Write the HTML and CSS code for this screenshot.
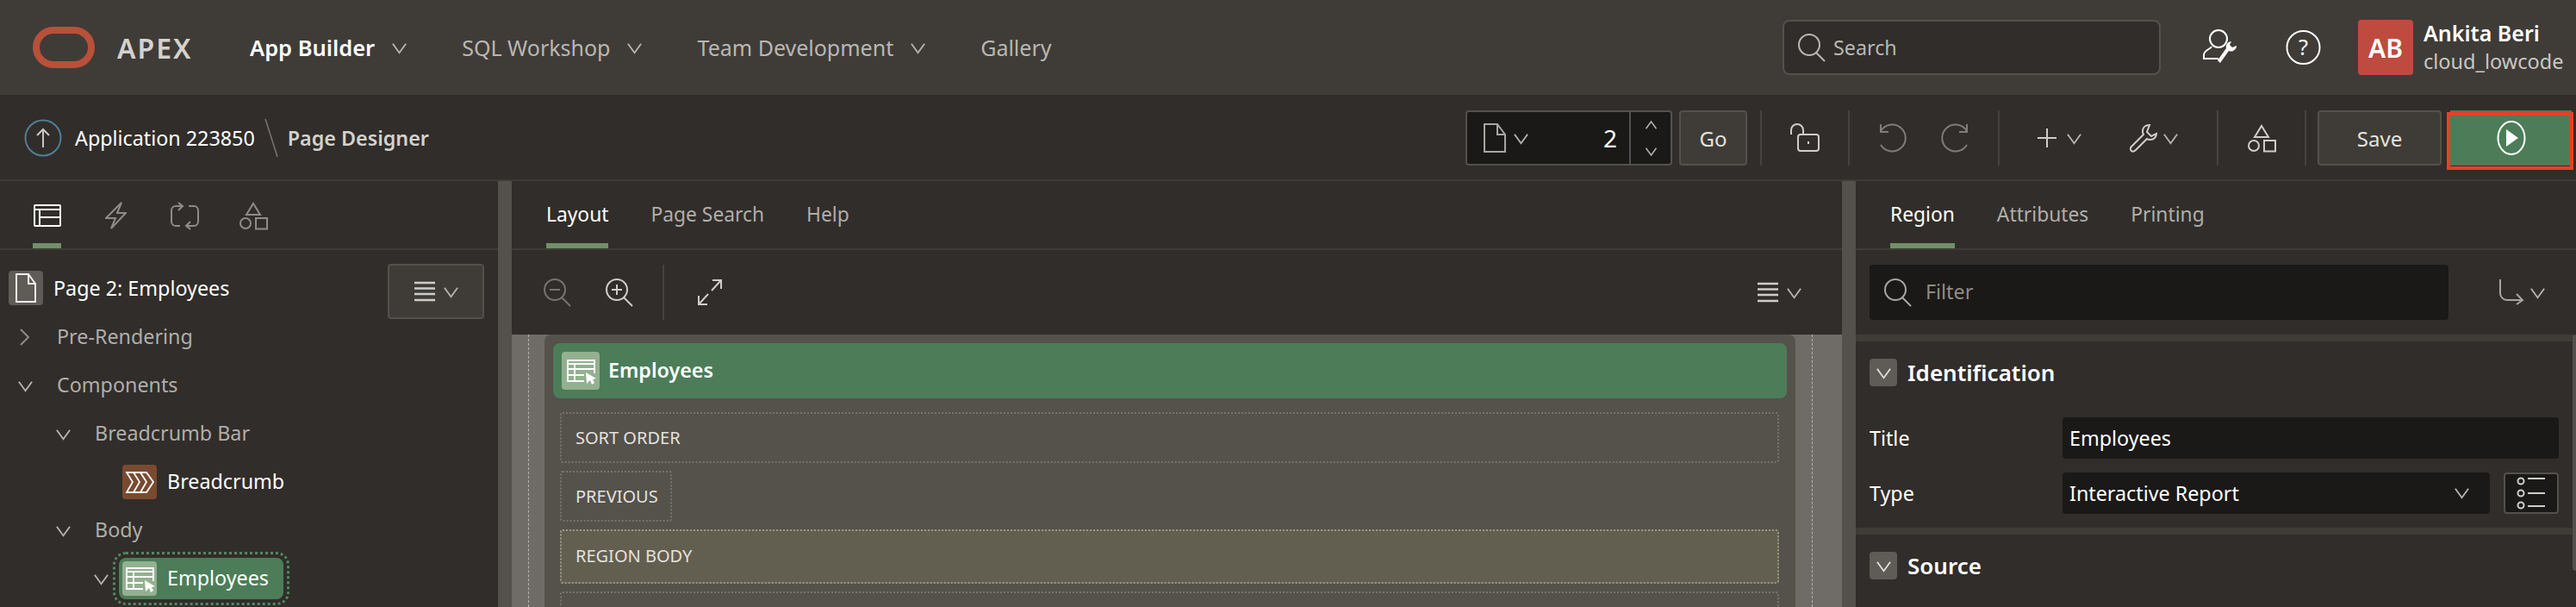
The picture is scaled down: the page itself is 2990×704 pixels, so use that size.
FILE: index.html
```html
<!DOCTYPE html>
<html>
<head>
<title>Page Designer</title>
<link rel="stylesheet" href="styles.css">
</head>
<body>

<svg class="defs" width="0" height="0">
  <symbol id="chev" viewBox="0 0 20 20"><path d="M2 5l8 11 8-11" fill="none" stroke="currentColor" stroke-width="2"/></symbol>
  <symbol id="shapes" viewBox="0 0 33 33"><path d="M16 2l8 13H8z" fill="none" stroke="currentColor" stroke-width="2"/><circle cx="7" cy="25" r="6" fill="none" stroke="currentColor" stroke-width="2"/><rect x="19" y="19" width="13" height="12.500" fill="none" stroke="currentColor" stroke-width="2"/></symbol>
  <symbol id="menu" viewBox="0 0 26 26"><path d="M1 3h24M1 9.500h24M1 16h24M1 23h24" stroke="currentColor" stroke-width="2.500"/></symbol>
  <symbol id="mag" viewBox="0 0 34 34"><circle cx="14" cy="14" r="12" fill="none" stroke="currentColor" stroke-width="2"/><path d="M22 23l10 10" stroke="currentColor" stroke-width="2"/></symbol>
  <symbol id="report" viewBox="0 0 40 40"><path d="M24 32H5V8h31v15M5 12h31M5 18h31M5 25h19M13 12v20" fill="none" stroke="currentColor" stroke-width="1.800"/><path d="M26 22l1 13 4-4 2 5 3-2-2-4 4-1z" fill="currentColor"/></symbol>
</svg>

<header class="topbar">
  <svg class="logo" width="72" height="48" viewBox="0 0 72 48"><rect x="4" y="4" width="64" height="40" rx="20" ry="20" fill="none" stroke="#b8503a" stroke-width="8"/></svg>
  <span class="brand">APEX</span>
  <nav class="mainnav">
    <a class="navitem navitem-on">App Builder <svg class="chev"><use href="#chev"/></svg></a>
    <a class="navitem">SQL Workshop <svg class="chev"><use href="#chev"/></svg></a>
    <a class="navitem">Team Development <svg class="chev"><use href="#chev"/></svg></a>
    <a class="navitem">Gallery</a>
  </nav>
  <div class="topright">
    <div class="search">
      <svg class="search-icon"><use href="#mag"/></svg>
      <span>Search</span>
    </div>
    <svg class="usertool" width="41" height="42" viewBox="0 0 41 42" fill="none" stroke="#fff" stroke-width="2"><ellipse cx="18" cy="11" rx="10" ry="10"/><path d="M10 20c-1 3-9 4-9 10v4h17"/><path d="M27 22c-1-4 2-8 6-8l-2 4 3 3 5-2c0 4-4 8-9 6L20 39l-3-3z" fill="#fff" stroke="none"/></svg>
    <svg class="help" width="41" height="42" viewBox="0 0 42 42"><circle cx="21" cy="21" r="19.500" fill="none" stroke="#fff" stroke-width="2"/><text x="21" y="30" class="help-q">?</text></svg>
    <div class="avatar">AB</div>
    <div class="who">
      <div class="who-name">Ankita Beri</div>
      <div class="who-id">cloud_lowcode</div>
    </div>
  </div>
</header>

<div class="subbar">
  <div class="crumbs">
    <svg width="44" height="44" viewBox="0 0 44 44" fill="none"><circle cx="22" cy="22" r="20.500" stroke="#4f7f93" stroke-width="2"/><path d="M22 33V12M15 19l7-7 7 7" stroke="#c9c7c3" stroke-width="2"/></svg>
    <span class="crumb">Application 223850</span>
    <svg class="crumb-sep" width="16" height="44" viewBox="0 0 16 44"><path d="M1 0l14 44" stroke="#777" stroke-width="1.500"/></svg>
    <span class="crumb-cur">Page Designer</span>
  </div>
  <div class="tools">
    <div class="pagebox">
      <svg class="page-icon" width="26" height="34" viewBox="0 0 26 34" fill="none" stroke="#a8a6a2" stroke-width="2"><path d="M1 1h15l9 12v20H1zM16 1v12h9"/></svg>
      <svg class="chev"><use href="#chev"/></svg>
      <span class="pagenum">2</span>
      <div class="spin">
        <svg class="chev-s chev-up"><use href="#chev"/></svg>
        <svg class="chev-s"><use href="#chev"/></svg>
      </div>
    </div>
    <button class="btn btn-go">Go</button>
    <i class="divider"></i>
    <div class="tool-group tg-narrow">
      <svg width="34" height="34" viewBox="0 0 34 34" fill="none" stroke="#cfcdc9" stroke-width="2"><path d="M1 13V8a7 7 0 0 1 14 0v5"/><rect x="9" y="13" width="24" height="19" rx="3"/><path d="M21 21v3"/></svg>
    </div>
    <i class="divider"></i>
    <div class="tool-group tg-undo">
      <svg width="32" height="34" viewBox="0 0 32 34" fill="none" stroke="#807c77" stroke-width="2"><path d="M2 1v9h9"/><path d="M2 9A15.500 15.500 0 1 1 2 25"/></svg>
      <svg width="32" height="34" viewBox="0 0 32 34" fill="none" stroke="#807c77" stroke-width="2"><path d="M30 1v9h-9"/><path d="M30 9A15.500 15.500 0 1 0 30 25"/></svg>
    </div>
    <i class="divider"></i>
    <div class="tool-group tg-add">
      <div class="tool-pair tool-pair-wide">
        <svg width="22" height="22" viewBox="0 0 22 22"><path d="M11 0v22M0 11h22" stroke="#cfcdc9" stroke-width="2"/></svg>
        <svg class="chev"><use href="#chev"/></svg>
      </div>
      <div class="tool-pair">
        <svg width="32" height="34" viewBox="0 0 32 32" fill="none" stroke="#cfcdc9" stroke-width="2"><path d="M23 1c-5 0-8 3-8 7 0 2 0 3 1 4L2 26c-2 2-1 4 0 5s3 1 5-1l13-13c1 1 3 1 4 1 4 0 7-3 7-7l-6 3-5-5z"/></svg>
        <svg class="chev"><use href="#chev"/></svg>
      </div>
    </div>
    <i class="divider"></i>
    <div class="tool-group tg-narrow">
      <svg class="shape-lg"><use href="#shapes"/></svg>
    </div>
    <i class="divider"></i>
    <button class="btn btn-save">Save</button>
    <button class="btn-run">
      <svg width="34" height="42" viewBox="0 0 34 42"><ellipse cx="17" cy="21" rx="15.500" ry="19" fill="none" stroke="#fff" stroke-width="2"/><path d="M11 11l14 10-14 10z" fill="#fff"/></svg>
    </button>
    <i class="annot"></i>
  </div>
</div>

<main class="designer">

  <section class="left">
    <div class="tabs tabs-icons">
      <a class="tab tab-on">
        <svg width="32" height="26" viewBox="0 0 32 26" fill="none" stroke="#fff" stroke-width="2"><rect x="1" y="1" width="30" height="24" rx="1"/><path d="M1 6h30M7 6v19M7 15h24"/></svg>
      </a>
      <a class="tab"><svg width="25" height="32" viewBox="0 0 25 32" fill="none" stroke="#8f8c87" stroke-width="2"><path d="M19 1L1 19h11L7 31l17-18H14z"/></svg></a>
      <a class="tab"><svg width="33" height="33" viewBox="0 0 33 33" fill="none" stroke="#8f8c87" stroke-width="2"><path d="M14 5H6a5 5 0 0 0-5 5v13a5 5 0 0 0 5 5h5M9 1l5 4-5 5M21 5h6a5 5 0 0 1 5 5v13a5 5 0 0 1-5 5h-9M23 23l-5 5 5 4"/></svg></a>
      <a class="tab"><svg class="shape-tab"><use href="#shapes"/></svg></a>
    </div>
    <div class="treehead">
      <div class="pageicon">
        <svg width="24" height="34" viewBox="0 0 24 34" fill="none" stroke="#eee" stroke-width="2"><path d="M1 1h14l8 11v21H1zM15 1v11h8"/></svg>
      </div>
      <span class="treehead-text">Page 2: Employees</span>
      <button class="btn btn-menu">
        <svg class="menu-icon"><use href="#menu"/></svg>
        <svg class="chev"><use href="#chev"/></svg>
      </button>
    </div>
    <div class="tree">
      <div class="row lvl1">
        <span class="twist"><svg width="12" height="20" viewBox="0 0 12 20"><path d="M1 1l9 9-9 9" fill="none" stroke="#8f8c87" stroke-width="2"/></svg></span>
        <span class="row-text">Pre-Rendering</span>
      </div>
      <div class="row lvl1">
        <span class="twist"><svg class="chev"><use href="#chev"/></svg></span>
        <span class="row-text">Components</span>
      </div>
      <div class="row lvl2">
        <span class="twist"><svg class="chev"><use href="#chev"/></svg></span>
        <span class="row-text">Breadcrumb Bar</span>
      </div>
      <div class="row lvl3">
        <span class="twist"></span>
        <div class="node">
          <span class="node-icon node-icon-brown">
            <svg width="40" height="40" viewBox="0 0 40 40" fill="none" stroke="#fff" stroke-width="1.800"><path d="M5 9h23l8 11-8 12H5l7-12zM13 9l7 11-7 12M21 9l7 11-7 12"/></svg>
          </span>
          <span class="node-text">Breadcrumb</span>
        </div>
      </div>
      <div class="row lvl2">
        <span class="twist"><svg class="chev"><use href="#chev"/></svg></span>
        <span class="row-text">Body</span>
      </div>
      <div class="row lvl3">
        <span class="twist"><svg class="chev"><use href="#chev"/></svg></span>
        <div class="node node-on">
          <span class="node-icon node-icon-green"><svg class="report"><use href="#report"/></svg></span>
          <span class="node-text">Employees</span>
        </div>
      </div>
    </div>
  </section>

  <div class="splitter"></div>

  <section class="middle">
    <div class="tabs">
      <a class="tab tab-on">Layout</a>
      <a class="tab">Page Search</a>
      <a class="tab">Help</a>
    </div>
    <div class="gridbar">
      <svg class="mag mag-off" viewBox="0 0 34 34"><use href="#mag"/><path d="M8 14h12" stroke="currentColor" stroke-width="2"/></svg>
      <svg class="mag" viewBox="0 0 34 34"><use href="#mag"/><path d="M8 14h12M14 8v12" stroke="currentColor" stroke-width="2"/></svg>
      <i class="divider divider-thin"></i>
      <svg width="28" height="30" viewBox="0 0 28 30" fill="none" stroke="#cfcdc9" stroke-width="2"><path d="M17 1h10v10M27 1L16 13M1 19v10h10M1 29l11-12"/></svg>
      <div class="gridbar-menu">
        <svg class="menu-icon"><use href="#menu"/></svg>
        <svg class="chev"><use href="#chev"/></svg>
      </div>
    </div>
    <div class="canvas">
      <div class="gutter gutter-l"><i class="gutter-line"></i></div>
      <div class="page">
        <div class="region-head">
          <span class="region-icon"><svg class="report"><use href="#report"/></svg></span>
          <span class="region-title">Employees</span>
        </div>
        <div class="slots">
          <div class="slot">SORT ORDER</div>
          <div class="slot slot-short">PREVIOUS</div>
          <div class="slot slot-body">REGION BODY</div>
          <div class="slot"></div>
        </div>
      </div>
      <div class="gutter gutter-r"><i class="gutter-line"></i></div>
    </div>
  </section>

  <div class="splitter"></div>

  <section class="right">
    <div class="tabs">
      <a class="tab tab-on">Region</a>
      <a class="tab">Attributes</a>
      <a class="tab">Printing</a>
    </div>
    <div class="filterbar">
      <div class="filter">
        <svg class="filter-icon"><use href="#mag"/></svg>
        <span class="filter-text">Filter</span>
      </div>
      <div class="goto">
        <svg width="30" height="30" viewBox="0 0 30 30" fill="none" stroke="#a8a6a2" stroke-width="2"><path d="M2 0v16a8 8 0 0 0 8 8h18M21 17l7 7-7 5"/></svg>
        <svg class="chev"><use href="#chev"/></svg>
      </div>
    </div>
    <div class="band"></div>
    <div class="prop-group">
      <div class="prop-head">
        <span class="toggle"><svg class="chev"><use href="#chev"/></svg></span>
        <span class="prop-title">Identification</span>
      </div>
      <div class="field">
        <label class="field-label">Title</label>
        <div class="input">Employees</div>
      </div>
      <div class="field">
        <label class="field-label">Type</label>
        <div class="input input-select">Interactive Report <svg class="chev"><use href="#chev"/></svg></div>
        <span class="lov">
          <svg width="34" height="44" viewBox="0 0 34 44" fill="none" stroke="#cfcdc9" stroke-width="2"><circle cx="5" cy="8" r="3.500"/><circle cx="5" cy="22" r="3.500"/><circle cx="5" cy="36" r="3.500"/><path d="M13 5h20M13 22h20M13 37h20"/></svg>
        </span>
      </div>
    </div>
    <div class="band"></div>
    <div class="prop-group">
      <div class="prop-head">
        <span class="toggle"><svg class="chev"><use href="#chev"/></svg></span>
        <span class="prop-title">Source</span>
      </div>
    </div>
    <i class="scrollbar"></i>
  </section>

</main>

</body>
</html>
```

FILE: styles.css
```css
* {
  box-sizing: border-box;
}
html, body {
  margin: 0;
  height: 704px;
  overflow: hidden;
}
body {
  font-family: "Noto Sans", "Open Sans", sans-serif;
  font-size: 23.3px;
  color: #fff;
  background-color: #312d2a;
}
.defs {
  position: absolute;
}
.chev {
  width: 19px;
  height: 19px;
  color: #b5b3af;
  flex: none;
}

/* top bar */
.topbar {
  height: 110px;
  display: flex;
  align-items: center;
  padding-left: 38px;
  background-color: #3f3c38;
}
.logo {
  flex: none;
}
.brand {
  width: 90px;
  margin-left: 26px;
  font-size: 32px;
  font-weight: 600;
  letter-spacing: 2px;
  color: #d4d2ce;
}
.mainnav {
  display: flex;
  margin-left: 64px;
  gap: 63px;
}
.navitem {
  display: flex;
  align-items: center;
  gap: 19px;
  color: #b9b7b3;
  font-size: 25px;
}
.navitem-on {
  color: #fff;
  font-size: 25.500px;
  font-weight: 600;
}
.topright {
  margin-left: auto;
  display: flex;
  align-items: center;
}
.search {
  width: 439px;
  height: 64px;
  display: flex;
  align-items: center;
  gap: 8px;
  padding-left: 15px;
  background-color: #312d2a;
  border: 2px solid #54504c;
  border-radius: 8px;
  color: #b9b7b3;
}
.search-icon {
  width: 34px;
  height: 34px;
  color: #b9b7b3;
}
.usertool {
  margin-left: 49px;
}
.help {
  margin-left: 55px;
}
.help-q {
  font-size: 26px;
  fill: #fff;
  text-anchor: middle;
}
.avatar {
  margin-left: 43px;
  width: 64px;
  height: 64px;
  border-radius: 4px;
  background: repeating-radial-gradient(ellipse at 45% 55%, #c2493f 0 7px, #bb4c3e 7px 13px);
  display: flex;
  align-items: center;
  justify-content: center;
  font-size: 30px;
  font-weight: 600;
}
.who {
  margin-left: 12px;
  margin-right: 16px;
  width: 161px;
  line-height: 33px;
}
.who-name {
  font-size: 25px;
  font-weight: 600;
}
.who-id {
  font-size: 23.500px;
  color: #c9c7c3;
}

/* breadcrumb and toolbar */
.subbar {
  height: 100px;
  display: flex;
  justify-content: space-between;
  padding: 18px 5px 0 28px;
  border-bottom: 2px solid #3f3c38;
}
.crumbs {
  height: 64px;
  display: flex;
  align-items: center;
}
.crumb {
  margin-left: 15px;
}
.crumb-sep {
  margin: 0 11px;
}
.crumb-cur {
  color: #d4d2ce;
  font-weight: 600;
}
.tools {
  position: relative;
  display: flex;
  align-items: center;
  height: 64px;
}
.pagebox {
  width: 240px;
  height: 64px;
  display: flex;
  align-items: center;
  padding-left: 19px;
  background-color: #1a1917;
  border: 2px solid #54504c;
  border-radius: 4px;
}
.page-icon {
  flex: none;
}
.pagebox .chev {
  margin-left: 8px;
}
.pagenum {
  margin-left: auto;
  margin-right: 14px;
  font-size: 28px;
}
.spin {
  width: 48px;
  height: 60px;
  border-left: 2px solid #54504c;
  display: flex;
  flex-direction: column;
  align-items: center;
  justify-content: space-around;
}
.chev-s {
  width: 15px;
  height: 15px;
  color: #b5b3af;
}
.chev-up {
  transform: rotate(180deg);
}
.btn {
  font-family: inherit;
  color: #e4e2de;
  background-color: #3f3c38;
  border: 2px solid #54504c;
  border-radius: 4px;
  height: 64px;
}
.btn-go {
  width: 79px;
  margin-left: 8px;
  margin-right: 15px;
  font-size: 24px;
}
.btn-save {
  width: 144px;
  margin-left: 13px;
  font-size: 24px;
}
.btn-run {
  width: 141px;
  height: 64px;
  margin-left: 10px;
  border: 0;
  background-color: #4c7d58;
  display: flex;
  align-items: center;
  justify-content: center;
}
.annot {
  position: absolute;
  right: -2px;
  top: 2px;
  width: 147px;
  height: 67px;
  border: 4px solid #ea3f26;
}
.divider {
  width: 2px;
  height: 64px;
  background-color: #46423e;
  flex: none;
}
.tool-group {
  height: 64px;
  display: flex;
  align-items: center;
  justify-content: center;
}
.tg-narrow {
  width: 100px;
}
.tg-undo {
  width: 172px;
  gap: 40px;
}
.tg-add {
  width: 252px;
  gap: 55px;
}
.tool-pair {
  display: flex;
  align-items: center;
  gap: 6px;
}
.tool-pair-wide {
  gap: 11px;
}
.shape-lg {
  width: 33px;
  height: 33px;
  color: #cfcdc9;
}

/* panels */
.designer {
  display: flex;
  height: 494px;
}
.left {
  width: 578px;
  flex: none;
}
.middle {
  width: 1544px;
  flex: none;
  display: flex;
  flex-direction: column;
}
.right {
  position: relative;
  flex: 1;
}
.splitter {
  width: 16px;
  flex: none;
  background-color: #54504c;
}
.tabs {
  height: 80px;
  flex: none;
  display: flex;
  gap: 49px;
  padding-left: 40px;
  font-size: 22.800px;
  border-bottom: 2px solid #3f3c38;
}
.tabs-icons {
  padding-left: 38px;
  gap: 47px;
}
.tab {
  height: 78px;
  display: flex;
  align-items: center;
  padding-top: 4px;
  color: #b0aeaa;
  border-bottom: 6px solid transparent;
}
.tabs-icons .tab {
  width: 33px;
  padding-top: 8px;
  justify-content: center;
}
.tab-on {
  color: #fff;
  border-bottom-color: #6f9068;
}
.shape-tab {
  width: 33px;
  height: 33px;
  flex: none;
  color: #8f8c87;
}

/* left tree */
.treehead {
  height: 73px;
  display: flex;
  align-items: flex-start;
  padding: 16px 16px 0 10px;
}
.pageicon {
  width: 40px;
  height: 40px;
  margin-top: 8px;
  border-radius: 4px;
  background-color: #5f5b56;
  display: flex;
  align-items: center;
  justify-content: center;
}
.treehead-text {
  margin-left: 12px;
  margin-top: 12px;
}
.btn-menu {
  margin-left: auto;
  width: 112px;
  display: flex;
  align-items: center;
  justify-content: center;
  gap: 8px;
}
.menu-icon {
  width: 26px;
  height: 26px;
  color: #cfcdc9;
  flex: none;
}
.row {
  height: 56px;
  display: flex;
  align-items: center;
}
.lvl1 {
  padding-left: 19px;
}
.lvl2 {
  padding-left: 63px;
}
.lvl3 {
  padding-left: 107px;
}
.twist {
  width: 20px;
  flex: none;
  display: flex;
  justify-content: center;
}
.row-text {
  margin-left: 27px;
  padding-bottom: 3px;
  color: #b0aeaa;
}
.node {
  margin-left: 11px;
  height: 48px;
  display: flex;
  align-items: center;
  padding: 4px 17px 4px 4px;
  border-radius: 8px;
}
.node-on {
  background-color: #4c7d58;
  outline: 3px dotted #4f8a60;
  outline-offset: 4px;
}
.node-icon {
  width: 40px;
  height: 40px;
  border-radius: 4px;
  display: flex;
  align-items: center;
  justify-content: center;
}
.node-icon-brown {
  background-color: #7a4a30;
}
.node-icon-green {
  background-color: #93b090;
}
.node-text {
  margin-left: 12px;
  padding-bottom: 3px;
}
.report {
  width: 40px;
  height: 40px;
  color: #fff;
}

/* layout grid */
.gridbar {
  height: 98px;
  flex: none;
  display: flex;
  align-items: center;
  padding-left: 36px;
  padding-right: 46px;
}
.mag {
  width: 34px;
  height: 34px;
  color: #cfcdc9;
  margin-right: 38px;
  flex: none;
}
.mag-off {
  color: #77736e;
}
.mag + .divider-thin {
  margin-left: -5px;
}
.divider-thin {
  margin-right: 39px;
}
.gridbar-menu {
  margin-left: auto;
  display: flex;
  align-items: center;
  gap: 8px;
}
.canvas {
  flex: 1;
  min-height: 0;
  display: flex;
  background-color: #6f6b66;
  overflow: hidden;
}
.gutter {
  flex: none;
}
.gutter-l {
  width: 38px;
}
.gutter-r {
  width: 54px;
}
.gutter-line {
  display: block;
  height: 100%;
  margin-left: 19px;
  border-left: 1px dashed #b5b3af;
}
.page {
  flex: 1;
  padding: 10px 10px 0;
  background-color: #55514b;
  border-radius: 8px 8px 0 0;
}
.region-head {
  height: 64px;
  display: flex;
  align-items: center;
  padding-left: 10px;
  background-color: #4c7d58;
  border-radius: 8px;
}
.region-icon {
  width: 44px;
  height: 44px;
  border-radius: 4px;
  background-color: #93b090;
  display: flex;
  align-items: center;
  justify-content: center;
}
.region-title {
  margin-left: 10px;
  padding-bottom: 2px;
  font-weight: 600;
}
.slots {
  display: flex;
  flex-direction: column;
  gap: 9px;
  margin: 16px 9px 0 8px;
}
.slot {
  height: 59px;
  flex: none;
  display: flex;
  align-items: center;
  padding-left: 16px;
  font-size: 20px;
  color: #e4e2de;
  border: 2px dotted #77736e;
  border-radius: 3px;
}
.slot-short {
  width: 130px;
}
.slot-body {
  height: 63px;
  padding-bottom: 2px;
  background-color: #635f50;
  border-color: #9a9884;
}

/* property editor */
.filterbar {
  height: 98px;
  display: flex;
  align-items: center;
  padding-left: 16px;
}
.filter {
  width: 672px;
  height: 64px;
  display: flex;
  align-items: center;
  gap: 15px;
  padding-left: 16px;
  background-color: #1a1917;
  border-radius: 4px;
  color: #8f8c87;
}
.filter-text {
  padding-bottom: 2px;
}
.filter-icon {
  width: 34px;
  height: 34px;
  color: #a8a6a2;
}
.goto {
  margin-left: 58px;
  display: flex;
  align-items: center;
  gap: 6px;
}
.band {
  height: 8px;
  background-color: #3f3c38;
}
.prop-group {
  padding: 20px 20px 0 16px;
}
.prop-head {
  display: flex;
  align-items: center;
  height: 32px;
  margin-bottom: 36px;
}
.toggle {
  width: 32px;
  height: 32px;
  border-radius: 4px;
  background-color: #5f5b56;
  display: flex;
  align-items: center;
  justify-content: center;
}
.toggle .chev {
  color: #dedcd8;
}
.prop-title {
  margin-left: 12px;
  font-size: 26px;
  font-weight: 600;
}
.field {
  height: 48px;
  display: flex;
  align-items: center;
  margin-bottom: 16px;
}
.field-label {
  width: 224px;
  padding-bottom: 1px;
}
.input {
  width: 576px;
  height: 48px;
  display: flex;
  align-items: center;
  padding-left: 8px;
  padding-bottom: 1px;
  background-color: #1a1917;
  border-radius: 4px;
}
.input-select {
  width: 496px;
  justify-content: space-between;
  padding-right: 23px;
}
.lov {
  width: 64px;
  height: 48px;
  margin-left: 16px;
  display: flex;
  align-items: center;
  justify-content: center;
  background-color: #1a1917;
  border: 2px solid #54504c;
  border-radius: 4px;
}
.scrollbar {
  position: absolute;
  right: 0;
  top: 178px;
  width: 4px;
  height: 274px;
  background-color: #54504c;
  border-radius: 4px 0 0 4px;
}
```
